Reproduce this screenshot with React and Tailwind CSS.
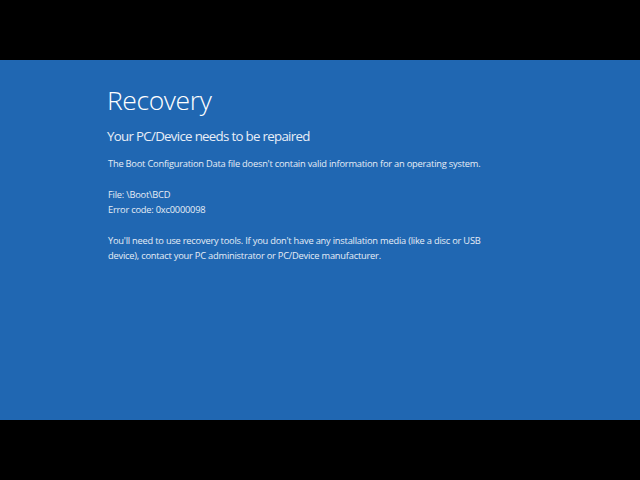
import React from 'react';

const font = { fontFamily: '"Open Sans", "Noto Sans", sans-serif' };

export default function App() {
  return (
    <div className="flex h-[480px] w-[640px] flex-col bg-black" style={font}>
      <div className="h-[60px]" />
      <div className="flex-1 bg-[#2067b2] pl-[107px] pt-[21px] text-white">
        <h1 className="text-[26.5px] font-light leading-[38px] tracking-[-0.4px]">Recovery</h1>
        <h2 className="mt-[7px] text-[13.3px] leading-[20px] tracking-[-0.7px] text-[#e8eef7]">
          Your PC/Device needs to be repaired
        </h2>
        <div className="mt-[10px] w-[400px] pl-[1px] text-[9.3px] leading-[15.5px] tracking-[-0.22px] text-[#e6edf6]">
          <p>The Boot Configuration Data file doesn&apos;t contain valid information for an operating system.</p>
          <p className="mt-[15px]">File: \Boot\BCD</p>
          <p>Error code: 0xc0000098</p>
          <p className="mt-[15px] w-[385px]">
            You&apos;ll need to use recovery tools. If you don&apos;t have any installation media (like a disc or USB
            device), contact your PC administrator or PC/Device manufacturer.
          </p>
        </div>
      </div>
      <div className="h-[60px]" />
    </div>
  );
}
